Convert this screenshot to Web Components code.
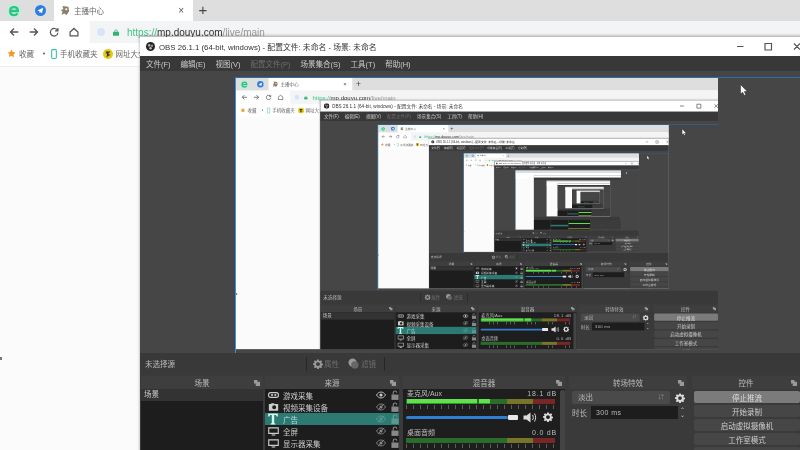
<!DOCTYPE html>
<html lang="zh"><head><meta charset="utf-8"><title>OBS</title>
<style>
html,body{margin:0;width:800px;height:450px;overflow:hidden;background:#fff;font-family:"Liberation Sans","Noto Sans CJK SC",sans-serif}
desk-view.root{filter:blur(.65px)}
</style></head><body>
<desk-view class="root" depth="7"></desk-view>
<script>
const CJK='"Liberation Sans","Noto Sans CJK SC",sans-serif';
const def=(n,css,html)=>{customElements.define(n,class extends HTMLElement{
  connectedCallback(){ if(this.shadowRoot)return; const s=this.attachShadow({mode:'open'});
    const h=typeof html==='function'?html(this):html; s.innerHTML=`<style>${css}</style>${h}`; }
});};
const gear=(c='#ddd',z=14)=>`<svg width="${z}" height="${z}" viewBox="0 0 24 24"><path fill="${c}" fill-rule="evenodd" d="M10 1h4l.6 3.200 2 .8L19.400 3.200 22 6l-1.900 2.700.8 2 3.100.6v3.700l-3.100.6-.8 2L22 19.200 19.400 22l-2.800-1.900-2 .8L14 24h-4l-.6-3.100-2-.8L4.600 22 2 19.200l1.900-2.600-.8-2-3.100-.6v-3.700l3.100-.6.8-2L2 6l2.600-2.800L7.400 5l2-.8zM12 7.500a4.700 4.700 0 1 0 0 9.400 4.700 4.700 0 0 0 0-9.400z"/></svg>`;
const eye=(c,off)=>`<svg width="10" height="8" viewBox="0 0 22 16"><path fill="none" stroke="${c}" stroke-width="2" d="M1 8c3-4.500 6-6.500 10-6.500S18 3.500 21 8c-3 4.500-6 6.500-10 6.500S4 12.500 1 8z"/><circle cx="11" cy="8" r="3.400" fill="${c}"/>${off?`<path stroke="${c}" stroke-width="2" d="M4 15L18 1"/>`:''}</svg>`;
const lock=c=>`<svg width="8" height="10" viewBox="0 0 18 22"><path fill="none" stroke="${c}" stroke-width="2.500" d="M5 10V6a4 4 0 0 1 8 0"/><rect x="1" y="10" width="16" height="12" fill="${c}"/></svg>`;
const mon=`<svg width="11" height="9" viewBox="0 0 30 24"><path fill="none" stroke="#ccc" stroke-width="3" d="M2 2h26v15H2z"/><path fill="#ccc" d="M10 20h10v3H10z"/></svg>`;
const ICONS={
 game:`<svg width="11" height="6" viewBox="0 0 30 16"><rect x="1.500" y="1.500" width="27" height="13" rx="6" fill="none" stroke="#ccc" stroke-width="3"/><circle cx="11" cy="8" r="3" fill="#ccc"/><circle cx="20" cy="8" r="3" fill="#ccc"/></svg>`,
 cam:`<svg width="11" height="8" viewBox="0 0 30 24"><path fill="#ccc" fill-rule="evenodd" d="M1 3h6l2-2h7l2 2h11v20H1zM17 7a6 6 0 1 0 0 12 6 6 0 0 0 0-12z"/></svg>`,
 text:`<svg width="12" height="12" viewBox="0 0 30 30"><path fill="#cfe" d="M3 1h24v8h-3l-2-4h-4v20l3 2v2H9v-2l3-2V5H8L6 9H3z"/></svg>`,
 mon
};

def('browser-tabs',`:host{display:flex;align-items:flex-end;height:21px;background:#dedede}
 .ic{height:21px;display:flex;align-items:center;justify-content:center}
 .tab{width:139px;height:21px;background:#fff;display:flex;align-items:center;box-sizing:border-box;padding:0 9px 0 6px;gap:4px;font:7.500px ${CJK};color:#666;margin-left:8px}
 .tab span{flex:1;white-space:nowrap}.x{font-size:10px;color:#555;flex:none!important}
 .plus{font-size:15px;color:#444;margin-left:3px;height:21px;line-height:20px;width:14px;text-align:center}`,
`<div class="ic" style="margin-left:7px;margin-right:14px"><svg width="14" height="14" viewBox="0 0 18 18"><rect x="0" y="0" width="18" height="18" rx="7" fill="#c5ecd8"/><path fill="none" stroke="#2bc585" stroke-width="3" d="M3.500 9h10.500c0-3-2-5-5-5s-5 2-5 5.200 2.200 5 5 5c2 0 3.500-.7 4.500-2.200"/></svg></div>
 <div class="ic"><svg width="11" height="11" viewBox="0 0 16 16"><circle cx="8" cy="8" r="8" fill="#2a7ee0"/><path fill="#fff" d="M3.500 8l8.500-4-2 8.500-2.200-2.500-1.300 1.500V9z"/></svg></div>
 <div class="tab"><svg width="10" height="11" viewBox="0 0 12 13"><path fill="#8d7f6e" d="M3 1l7 1 1 5-3 5-3-2-3 2 1-4-2-2 3-1z"/><circle cx="7.500" cy="5" r="1.300" fill="#fff"/></svg><span>主播中心</span><span class="x">×</span></div>
 <div class="plus">+</div>`);

def('browser-toolbar',`:host{display:flex;align-items:center;height:22px;background:#fff;padding-left:4px;box-sizing:border-box}
 svg{flex:none}.b{width:20px;display:flex;justify-content:center}
 .addr{flex:1;height:22px;margin-left:6px;background:#f3f4f6;display:flex;align-items:center;padding-left:7px;gap:8px;font:10px ${CJK};color:#333;white-space:nowrap}
 .g{color:#47c28a}.m{color:#999}`,
`<div class="b"><svg width="10" height="10" viewBox="0 0 14 14"><path fill="none" stroke="#555" stroke-width="1.800" d="M13 7H2M7 2L2 7l5 5"/></svg></div>
 <div class="b"><svg width="10" height="10" viewBox="0 0 14 14"><path fill="none" stroke="#555" stroke-width="1.800" d="M1 7h11M7 2l5 5-5 5"/></svg></div>
 <div class="b"><svg width="10" height="10" viewBox="0 0 14 14"><path fill="none" stroke="#555" stroke-width="1.700" d="M12 5a5.300 5.300 0 1 0 .5 3M12.500 1.500V5.500H8.500"/></svg></div>
 <div class="b"><svg width="10" height="10" viewBox="0 0 14 14"><path fill="none" stroke="#555" stroke-width="1.700" d="M1.500 7L7 2l5.500 5v5.500h-11z"/></svg></div>
 <div class="addr"><svg width="8" height="8"><circle cx="4" cy="4" r="4" fill="#d8e4f8"/></svg><svg width="6" height="7" viewBox="0 0 9 10"><path fill="none" stroke="#2db56f" d="M2.500 5V3a2 2 0 0 1 4 0v2"/><rect y="4" width="9" height="6" rx="1" fill="#2db56f"/></svg><span><span class="g">https://</span>mp.douyu.com<span class="m">/live/main</span></span></div>`);

def('bookmark-bar',`:host{display:flex;align-items:center;height:24px;box-sizing:border-box;padding:0 0 3px 7px;background:#fff;font:7.500px ${CJK};color:#666;white-space:nowrap;box-shadow:inset 0 -1px #eee}
 .a{font-size:4px;margin:0 5px 0 8px;color:#444}`,
`<svg width="9" height="9" viewBox="0 0 24 24" style="margin-right:3px"><path fill="#f09a25" d="M12 1l3.400 7.200 7.600 1-5.600 5.400 1.400 7.800L12 17.700l-6.800 3.700 1.400-7.800L1 9.200l7.600-1z"/></svg><span>收藏</span><span class="a">▼</span>
 <svg width="6" height="10" viewBox="0 0 7 12" style="margin-right:3px"><rect x=".7" y=".7" width="5.600" height="10.600" rx="1" fill="none" stroke="#3cc0a8" stroke-width="1.300"/></svg><span style="margin-right:6px">手机收藏夹</span>
 <svg width="10" height="10" viewBox="0 0 12 12" style="margin-right:2px"><circle cx="6" cy="6" r="6" fill="#e4c711"/><path fill="#333" d="M3 3h6L6 6l3 1-5 3 1-3z"/></svg><span>网址大全</span>`);

def('dock-panel',`:host{display:flex;flex-direction:column;min-width:0}
 .h{height:13px;background:#3e3e3e;display:flex;align-items:center;justify-content:center;position:relative;font:7.500px ${CJK};color:#bbb;flex:none}
 .h svg{position:absolute;right:3px;top:4px}
 .b{flex:1;min-height:0;position:relative}`,
 t=>`<div class="h">${t.getAttribute('label')}<svg width="6" height="6" viewBox="0 0 7 7"><path fill="#999" d="M0 0h4v2h3v5H2V4H0z"/></svg></div><div class="b"><slot></slot></div>`);

def('source-row',`:host{display:flex;align-items:center;height:12px;padding:0 0 0 2px;font:7.500px ${CJK};color:#ccc}
 :host([sel]){background:#2d7a72;color:#bde}
 .i{width:12px;display:flex;justify-content:center;margin-right:4px}
 span{flex:1;white-space:nowrap}.e{display:flex;gap:5px;align-items:center}`,
 t=>`<div class="i">${ICONS[t.getAttribute('icon')]}</div><span>${t.getAttribute('label')}</span><div class="e">${eye(t.hasAttribute('sel')?'#5a9a94':t.hasAttribute('on')?'#ccc':'#888',!t.hasAttribute('on'))}${lock(t.hasAttribute('sel')?'#5a9a94':'#888')}</div>`);

def('audio-meter',`:host{display:block}
 .l{display:flex;justify-content:space-between;font:7px ${CJK};color:#bbb;height:10px;line-height:10px;padding:0 8px 0 4px;white-space:nowrap}
 .db{letter-spacing:.8px}
 .m{height:5px;display:flex;position:relative;width:149px;margin-left:3px}
 .m i{display:block;height:100%}
 .f{position:absolute;left:1px;top:0;height:100%;background:#62e04e;box-shadow:inset 0 -1px #2e9a2e}
 .t{height:4px;width:149px;margin:1px 0 0 3px;background:repeating-linear-gradient(90deg,#777 0 1px,transparent 1px 7px);opacity:.7}`,
 t=>`<div class="l"><span>${t.getAttribute('label')}</span><span class="db">${t.getAttribute('db')}</span></div>
 <div class="m"><i style="width:101px;background:#2b6b2b"></i><i style="width:26px;background:#77752a"></i><i style="width:22px;background:#7a2626"></i>${t.hasAttribute('live')?'<div class="f" style="width:70px"></div><div class="f" style="left:73px;width:11px"></div>':''}</div><div class="t"></div>`);

def('control-button',`:host{display:flex;height:12px;margin-bottom:2px;align-items:center;justify-content:center;background:#464646;border-radius:2px;font:7.500px ${CJK};color:#ccc;white-space:nowrap}
 :host([on]){background:#7b7b7b;color:#ddd}`,`<slot></slot>`);

def('mini-desk',`:host{display:block;position:relative;width:800px;height:450px;overflow:hidden;background:#fbfbfb}
 .top{height:21px;background:#dedede}.sub{height:46px;background:#fff}
 .w{position:absolute;left:140px;top:37px;width:668px;height:418px;display:flex;flex-direction:column;background:#3a3a3a}
 .t{height:19px;background:#fff;flex:none}.m{height:15px;background:#383838;flex:none}
 .p{flex:1;position:relative;overflow:hidden;background:#464646}
 .s{position:absolute;left:96px;top:7px;width:800px;height:450px;transform:scale(.6025);transform-origin:0 0}
 .b{height:21px;flex:none}
 .d{height:81px;flex:none;display:grid;grid-template-columns:122px 134px 162px 118px 1fr;column-gap:4px;padding-top:2px;box-sizing:border-box}
 .d div{background:#1d1d1d;position:relative}.d .l{background:#3c3c3c}
 .d .g::after{content:"";position:absolute;left:0;right:0;top:37px;height:12px;background:#2d7a72}
 .d .v{background:linear-gradient(#1d1d1d 23px,#5ee04a 23px 28px,#1d1d1d 28px 62px,#6b7a2a 62px 67px,#1d1d1d 67px)}`,
 t=>{const d=+t.getAttribute('depth');return `<div class="top"></div><div class="sub"></div><div class="w"><div class="t"></div><div class="m"></div><div class="p">${d>0?`<div class="s"><mini-desk depth="${d-1}"></mini-desk></div>`:''}</div><div class="b"></div><div class="d"><div></div><div class="g"></div><div class="v"></div><div class="l"></div><div class="l"></div></div></div>`});

def('obs-window',`:host{position:absolute;left:140px;top:37px;width:668px;height:418px;display:flex;flex-direction:column;background:#3a3a3a;box-shadow:0 -1px 3px rgba(0,0,0,.35)}
 .title{height:19px;background:#fff;display:flex;align-items:center;padding-left:6px;gap:2px;font:7.800px ${CJK};color:#333;white-space:nowrap;flex:none}
 .title span{flex:1}
 .wc{width:76px;height:19px}
 .menu{height:15px;background:#383838;display:flex;align-items:center;padding-left:6px;gap:10px;font:7.500px ${CJK};color:#ccc;white-space:nowrap;flex:none}
 .menu .d{color:#6e6e6e}
 .prev{flex:1;position:relative;overflow:hidden;background:#464646;min-height:0}
 .sel{position:absolute;left:95px;top:6px;right:0;bottom:0;border-left:1.500px solid #3a90e0;border-top:1.500px solid #2a6cb0}
 .scene{position:absolute;left:96px;top:7px;width:800px;height:450px;transform:scale(.6025);transform-origin:0 0}
 .tools{height:21px;background:#393939;display:flex;align-items:center;padding-left:5px;font:7.500px ${CJK};color:#bbb;white-space:nowrap;flex:none}
 .tools .n{width:161px}.sep{width:1px;height:14px;background:#262626}
 .tb{display:flex;align-items:center;gap:1px;color:#6e6e6e}
 .docks{height:81px;box-sizing:border-box;flex:none;display:grid;grid-template-columns:122px 132px 162px 118px 1fr;column-gap:4px;padding:2px 8px 0 1px;background:#3a3a3a}
 .list{position:absolute;inset:0;background:#1d1d1d}
 .sc{height:12px;background:#333;padding-left:3px;font:7.500px ${CJK};color:#ccc;line-height:12px}
 .mix{position:absolute;inset:0;background:#1e1e1e}
 .bar{position:absolute;right:0;top:1px;bottom:0;width:5px;background:#444;border-radius:2px}
 .sl{display:flex;align-items:center;height:10px;margin:3px 0 6px 3px}
 .tr{height:3px;width:102px;background:#2f7fd0;border-radius:2px}.hd{width:10px;height:5px;background:#e8e8e8;border-radius:1px;margin-right:5px}
 .tp{position:absolute;inset:0;padding:2px 3px;font:7.500px ${CJK};color:#bbb}
 .r{display:flex;align-items:center;height:13px;margin-bottom:2px;white-space:nowrap}
 .combo{width:98px;height:13px;background:#4a4a4a;border-radius:2px;padding:0 6px;box-sizing:border-box;line-height:13px;display:flex;justify-content:space-between;flex:none}
 .in{width:87px;height:13px;background:#1d1d1d;padding-left:5px;box-sizing:border-box;line-height:13px;font-size:7px;margin-left:4px;letter-spacing:.4px;flex:none}
 .cp{position:absolute;inset:2px 0 0 2px}`,
 t=>{const d=+t.getAttribute('depth');const nx=d-1;return `
 <div class="title"><svg width="9" height="9" viewBox="0 0 12 12" style="flex:none;margin-right:2px"><circle cx="6" cy="6" r="6" fill="#222"/><circle cx="4.300" cy="4.500" r="1.700" fill="#aaa"/><circle cx="8" cy="5" r="1.700" fill="#888"/><circle cx="6" cy="8.200" r="1.700" fill="#bbb"/></svg><span>OBS 26.1.1 (64-bit, windows) - 配置文件: 未命名 - 场景: 未命名</span>
  <div class="wc"><svg width="80" height="19" viewBox="0 0 80 19" style="margin-left:-4px"><path stroke="#555" stroke-width="1.200" fill="none" d="M9 9.500h6.500M37 6.500h6.500v6.500H37zM66 6.500l6 6M72 6.500l-6 6"/></svg></div></div>
 <div class="menu"><span>文件(F)</span><span>编辑(E)</span><span>视图(V)</span><span class="d">配置文件(P)</span><span>场景集合(S)</span><span>工具(T)</span><span>帮助(H)</span></div>
 <div class="prev"><div class="scene">${nx>3?`<desk-view depth="${nx}"></desk-view>`:`<mini-desk depth="${nx}"></mini-desk>`}</div><div class="sel"></div></div>
 <div class="tools"><span class="n">未选择源</span><div class="sep"></div><div class="tb" style="margin:0 9px 0 6px">${gear('#999',10)}属性</div><div class="tb" style="margin-right:8px"><svg width="11" height="11" viewBox="0 0 12 12" style="margin-right:1px"><circle cx="5" cy="5" r="4.500" fill="#999"/><circle cx="7.500" cy="7.500" r="4" fill="#666"/></svg>滤镜</div><div class="sep"></div></div>
 <div class="docks">
  <dock-panel label="场景"><div class="list"><div class="sc">场景</div></div></dock-panel>
  <dock-panel label="来源" style="margin-left:-2px;width:134px"><div class="list">
   <source-row icon="game" label="游戏采集" on></source-row>
   <source-row icon="cam" label="视频采集设备"></source-row>
   <source-row icon="text" label="广告" sel></source-row>
   <source-row icon="mon" label="全屏"></source-row>
   <source-row icon="mon" label="显示器采集"></source-row></div></dock-panel>
  <dock-panel label="混音器"><div class="mix">
   <audio-meter label="麦克风/Aux" db="18.1 dB" live></audio-meter>
   <div class="sl"><div class="tr"></div><div class="hd"></div><svg width="14" height="11" viewBox="0 0 28 22" style="margin-right:6px"><path fill="#ddd" d="M1 7h6l8-6v20l-8-6H1z"/><path fill="none" stroke="#ddd" stroke-width="2" d="M19 6c2 3 2 7 0 10M23 3c3 5 3 11 0 16"/></svg>${gear('#ddd',10)}</div>
   <audio-meter label="桌面音频" db="0.0 dB"></audio-meter><div class="bar"></div></div></dock-panel>
  <dock-panel label="转场特效"><div class="tp">
   <div class="r"><div class="combo">淡出<span style="color:#888;font-size:6px">⇵</span></div><span style="margin-left:5px;display:flex">${gear('#ddd',10)}</span></div>
   <div class="r"><span>时长</span><div class="in">300 ms</div><span style="color:#ccc;font-size:6px;line-height:5px;text-align:center;margin-left:2px">⌃<br>⌄</span></div></div></dock-panel>
  <dock-panel label="控件" style="margin-left:1px"><div class="cp">
   <control-button on>停止推流</control-button><control-button>开始录制</control-button><control-button>启动虚拟摄像机</control-button><control-button>工作室模式</control-button><control-button>设置</control-button></div></dock-panel>
 </div>`});

def('desk-view',`:host{display:block;position:relative;width:800px;height:450px;overflow:hidden;background:#fff}
 .side{height:383px;background:#fbfbfb}
 .cur{position:absolute;left:740px;top:84px}
 .mk{position:absolute;left:0;top:357px;width:1.500px;height:3px;background:#777}`,
 t=>{const d=+t.getAttribute('depth');return `<browser-tabs></browser-tabs><browser-toolbar></browser-toolbar><bookmark-bar></bookmark-bar><div class="side"></div><div class="mk"></div>
 <obs-window depth="${d}"></obs-window><svg class="cur" width="8" height="12" viewBox="0 0 8 12"><path fill="#fff" stroke="#222" stroke-width=".5" d="M.5.500v9.500l2.200-1.800 1.500 3.300 1.600-.7-1.500-3.200h3z"/></svg>`});
</script>
</body></html>
